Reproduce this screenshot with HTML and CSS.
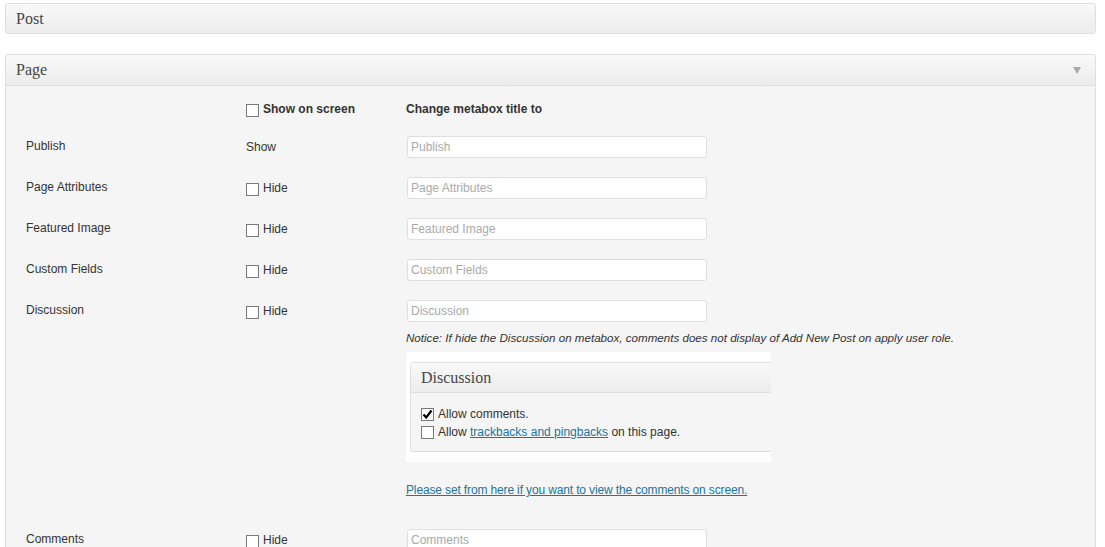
FILE: index.html
```html
<!DOCTYPE html>
<html>
<head>
<meta charset="utf-8">
<link rel="stylesheet" href="styles.css">
</head>
<body>
<div class="wrap">
  <div class="box box-closed">
    <div class="box-head"><h3>Post</h3></div>
  </div>

  <div class="box">
    <div class="box-head"><h3>Page</h3><span class="toggle"></span></div>
    <div class="box-body">
      <div class="row row-head">
        <div class="c-label"></div>
        <div class="c-show"><span class="cb"></span><span class="bold">Show on screen</span></div>
        <div class="c-input"><span class="bold">Change metabox title to</span></div>
      </div>

      <div class="row">
        <div class="c-label">Publish</div>
        <div class="c-show">Show</div>
        <div class="c-input"><input class="txt" type="text" placeholder="Publish"></div>
      </div>

      <div class="row">
        <div class="c-label">Page Attributes</div>
        <div class="c-show"><span class="cb"></span>Hide</div>
        <div class="c-input"><input class="txt" type="text" placeholder="Page Attributes"></div>
      </div>

      <div class="row">
        <div class="c-label">Featured Image</div>
        <div class="c-show"><span class="cb"></span>Hide</div>
        <div class="c-input"><input class="txt" type="text" placeholder="Featured Image"></div>
      </div>

      <div class="row">
        <div class="c-label">Custom Fields</div>
        <div class="c-show"><span class="cb"></span>Hide</div>
        <div class="c-input"><input class="txt" type="text" placeholder="Custom Fields"></div>
      </div>

      <div class="row row-disc">
        <div class="c-label">Discussion</div>
        <div class="c-show"><span class="cb"></span>Hide</div>
        <div class="c-input">
          <input class="txt" type="text" placeholder="Discussion">
          <p class="notice">Notice: If hide the Discussion on metabox, comments does not display of Add New Post on apply user role.</p>
          <div class="preview">
            <div class="pbox">
              <div class="pbox-head">Discussion</div>
              <div class="pbox-body">
                <div class="pline"><span class="cb checked"><svg width="11" height="11" viewBox="0 0 11 11"><path d="M1.5 5.5 L4.2 8.5 L9.5 1.5" fill="none" stroke="#000" stroke-width="2.2"/></svg></span>Allow comments.</div>
                <div class="pline"><span class="cb"></span>Allow&nbsp;<a href="#">trackbacks and pingbacks</a>&nbsp;on this page.</div>
              </div>
            </div>
          </div>
          <a class="set-link" href="#">Please set from here if you want to view the comments on screen.</a>
        </div>
      </div>

      <div class="row">
        <div class="c-label">Comments</div>
        <div class="c-show"><span class="cb"></span>Hide</div>
        <div class="c-input"><input class="txt" type="text" placeholder="Comments"></div>
      </div>
    </div>
  </div>
</div>
</body>
</html>
```

FILE: styles.css
```css
* { box-sizing: border-box; }
html, body { margin: 0; padding: 0; background: #fff; }
body {
  font-family: "Liberation Sans", Arial, sans-serif;
  font-size: 12px;
  color: #333;
}
.wrap { padding: 3px 9px 0 5px; }

.box {
  border: 1px solid #dfdfdf;
  border-radius: 3px;
  background: #f5f5f5;
  margin-bottom: 20px;
}
.box-head {
  height: 30px;
  display: flex;
  align-items: center;
  justify-content: space-between;
  padding: 0 10px;
  background: linear-gradient(#f9f9f9, #ececec);
  border-radius: 3px 3px 0 0;
}
.box-closed .box-head { height: 29px; border-radius: 3px; }
.box-head h3 {
  margin: 0;
  font-family: "Liberation Serif", "Times New Roman", serif;
  font-weight: normal;
  font-size: 16px;
  color: #464646;
}
.toggle {
  width: 0; height: 0;
  border-left: 4px solid transparent;
  border-right: 4px solid transparent;
  border-top: 7px solid #aaa;
  margin-right: 4px;
  margin-top: 1px;
}
.box-body {
  border-top: 1px solid #dfdfdf;
  padding: 15px 20px 20px 20px;
  background: #f5f5f5;
}

.row { display: flex; align-items: flex-start; margin-bottom: 19px; }
.row-head { margin-bottom: 19px; height: 16px; }
.row-disc { margin-bottom: 31px; }
.c-label { width: 220px; flex: none; line-height: 16px; padding-top: 2px; }
.c-show { width: 160px; flex: none; display: flex; align-items: center; line-height: 16px; padding-top: 3px; }
.row-head .c-show { padding-top: 0; }
.c-input { flex: 1; }
.row-head .c-input { padding-top: 0; line-height: 16px; }
.bold { font-weight: bold; }

.cb {
  display: inline-flex;
  align-items: center;
  justify-content: center;
  width: 13px; height: 13px;
  border: 1px solid #7a7a7a;
  background: #fff;
  margin-right: 4px;
  flex: none;
}
.c-show .cb { margin-top: 2px; }
.row-head .c-show .cb { margin-top: 3px; }

.txt {
  display: block;
  width: 300px;
  height: 22px;
  border: 1px solid #dfdfdf;
  border-radius: 3px;
  background: #fff;
  padding: 0 3px;
  font-family: "Liberation Sans", Arial, sans-serif;
  font-size: 12px;
  color: #333;
  margin: 0 0 0 1px;
  outline: none;
}
.txt::placeholder { color: #aaa; }

.notice {
  margin: 9px 0 0 0;
  font-style: italic;
  font-size: 11.6px;
  line-height: 14px;
  color: #333;
}
.preview {
  margin-top: 7px;
  width: 365px;
  background: #fff;
  padding: 10px 0 10px 4px;
  overflow: hidden;
}
.pbox {
  width: 420px;
  border: 1px solid #dfdfdf;
  border-radius: 3px;
  background: #f5f5f5;
}
.pbox-head {
  height: 30px;
  display: flex;
  align-items: center;
  padding: 0 10px;
  border-bottom: 1px solid #dfdfdf;
  background: linear-gradient(#f9f9f9, #ececec);
  font-family: "Liberation Serif", "Times New Roman", serif;
  font-size: 16px;
  color: #464646;
}
.pbox-body { padding: 12px 10px 10px 10px; }
.pline { display: flex; align-items: center; height: 18px; line-height: 18px; }
.pline .cb { margin-right: 4px; }
.pbox a, .set-link { color: #21759b; text-decoration: underline; }
.set-link { display: block; margin-top: 20px; line-height: 16px; letter-spacing: -0.14px; }
```
